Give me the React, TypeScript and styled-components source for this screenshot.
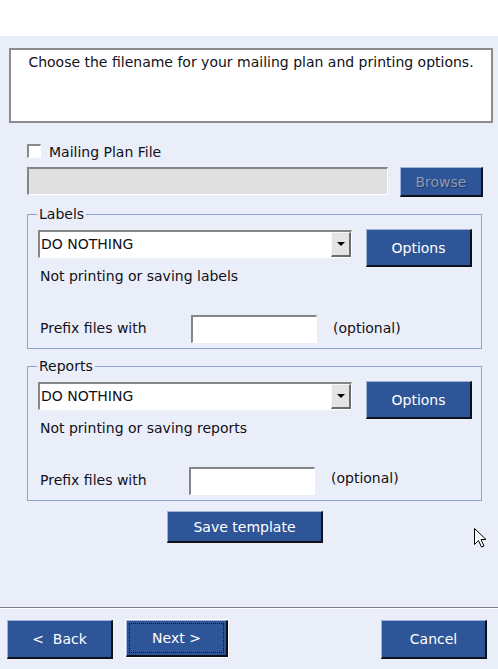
import styled, { createGlobalStyle } from 'styled-components';

const GlobalStyle = createGlobalStyle`
  body {
    margin: 0;
    background: #ffffff;
    font-family: "DejaVu Sans", "Liberation Sans", sans-serif;
    font-size: 14px;
    color: #111118;
  }
`;

const Page = styled.div`
  width: 498px;
  height: 669px;
  display: flex;
  flex-direction: column;
  position: relative;
  overflow: hidden;
`;

const TopBand = styled.div`
  height: 36px;
  background: #ffffff;
`;

const Body = styled.div`
  flex: 1;
  background: #eaeef8;
  display: flex;
  flex-direction: column;
  padding-top: 12px;
`;

const Intro = styled.div`
  margin: 0 5px 0 9px;
  height: 68px;
  background: #ffffff;
  border: 2px solid #8c8c8c;
  text-align: center;
  padding-top: 3px;
  line-height: 18px;
`;

const CheckRow = styled.label`
  display: flex;
  align-items: center;
  gap: 8px;
  margin: 21px 0 0 27px;
  height: 16px;
`;

const CheckBox = styled.span`
  width: 11px;
  height: 11px;
  margin-top: -2px;
  background: #ffffff;
  border-top: 2px solid #8a8a8a;
  border-left: 2px solid #8a8a8a;
  border-bottom: 1px solid #ffffff;
  border-right: 1px solid #ffffff;
`;

const FileRow = styled.div`
  display: flex;
  align-items: flex-start;
  margin: 7px 0 0 27px;
  gap: 12px;
`;

const FileField = styled.div`
  width: 358px;
  height: 25px;
  background: #e0e0e0;
  border-top: 2px solid #858585;
  border-left: 2px solid #858585;
  border-bottom: 1px solid #ffffff;
  border-right: 1px solid #ffffff;
`;

const Button = styled.button<{ $w: number; $h: number; $disabled?: boolean; $focus?: boolean }>`
  width: ${(p) => p.$w}px;
  height: ${(p) => p.$h}px;
  box-sizing: border-box;
  background: #2e5597;
  border-top: 1px solid #9fb4dc;
  border-left: 1px solid #9fb4dc;
  border-right: 2px solid #101018;
  border-bottom: 2px solid #101018;
  color: ${(p) => (p.$disabled ? '#8d9bb6' : '#ffffff')};
  text-shadow: ${(p) => (p.$disabled ? '1px 1px 0 #20386a' : 'none')};
  font-family: "DejaVu Sans", "Liberation Sans", sans-serif;
  font-size: 14px;
  padding: 0;
  display: flex;
  align-items: center;
  justify-content: center;
  outline: ${(p) => (p.$focus ? '1px solid #ffffff' : 'none')};
  outline-offset: 0;
  position: relative;
  cursor: default;
`;

const FocusRing = styled.span`
  position: absolute;
  inset: 2px;
  border: 1px dotted #111111;
`;

const Group = styled.fieldset<{ $top: number }>`
  margin: ${(p) => p.$top}px 16px 0 27px;
  padding: 0 8px 5px 10px;
  border: 1px solid #88a4d8;
  min-width: 0;
`;

const Legend = styled.legend`
  padding: 0 2px;
  margin-left: -1px;
  line-height: 16px;
`;

const GroupGrid = styled.div`
  display: grid;
  grid-template-columns: 314px 106px;
  column-gap: 14px;
  margin-top: 7px;
`;

const Left = styled.div`
  display: flex;
  flex-direction: column;
`;

const Select = styled.div`
  height: 25px;
  margin-top: 1px;
  background: #ffffff;
  border-top: 2px solid #858585;
  border-left: 2px solid #858585;
  border-bottom: 1px solid #ffffff;
  border-right: 1px solid #ffffff;
  display: flex;
  align-items: stretch;
`;

const SelectText = styled.span`
  flex: 1;
  padding-left: 1px;
  line-height: 24px;
`;

const ArrowBox = styled.span`
  width: 17px;
  background: #e4e4e4;
  border-top: 1px solid #f6f6f6;
  border-left: 1px solid #f6f6f6;
  border-right: 2px solid #6c6c6c;
  border-bottom: 2px solid #6c6c6c;
  display: flex;
  align-items: center;
  justify-content: center;
`;

const Triangle = styled.span`
  width: 0;
  height: 0;
  border-left: 4px solid transparent;
  border-right: 4px solid transparent;
  border-top: 4px solid #000000;
`;

const Note = styled.div`
  margin-top: 10px;
  padding-left: 2px;
  line-height: 16px;
`;

const PrefixRow = styled.div`
  display: flex;
  align-items: center;
  height: 28px;
  margin-top: 31px;
  padding-left: 2px;
  grid-column: 1 / 3;
`;

const PrefixLabel = styled.span<{ $w: number }>`
  width: ${(p) => p.$w}px;
  position: relative;
  top: -1px;
`;

const PrefixInput = styled.div`
  width: 123px;
  height: 25px;
  background: #ffffff;
  border-top: 2px solid #858585;
  border-left: 2px solid #858585;
  border-bottom: 1px solid #ffffff;
  border-right: 1px solid #ffffff;
  margin-right: 16px;
`;

const Optional = styled.span<{ $lift: number }>`
  position: relative;
  top: ${(p) => -p.$lift}px;
`;

const SaveRow = styled.div`
  margin: 10px 0 0 167px;
`;

const Spacer = styled.div`
  flex: 1;
`;

const Divider = styled.div`
  height: 1px;
  background: #7c7c7c;
  border-bottom: 1px solid #ffffff;
`;

const Footer = styled.div`
  display: flex;
  align-items: flex-start;
  padding: 11px 11px 10px 7px;
  height: 39px;
`;

const FooterGap = styled.div<{ $w: number }>`
  width: ${(p) => p.$w}px;
`;

const Cursor = styled.svg`
  position: absolute;
  left: 474px;
  top: 528px;
`;

function OptionGroup(props: {
  title: string;
  note: string;
  labelWidth: number;
  optionalLift: number;
}) {
  return (
    <Group $top={9}>
      <Legend>{props.title}</Legend>
      <GroupGrid>
        <Left>
          <Select>
            <SelectText>DO NOTHING</SelectText>
            <ArrowBox>
              <Triangle />
            </ArrowBox>
          </Select>
          <Note>{props.note}</Note>
        </Left>
        <Button $w={106} $h={38}>Options</Button>
        <PrefixRow>
          <PrefixLabel $w={props.labelWidth}>Prefix files with</PrefixLabel>
          <PrefixInput />
          <Optional $lift={props.optionalLift}>(optional)</Optional>
        </PrefixRow>
      </GroupGrid>
    </Group>
  );
}

export default function App() {
  return (
    <>
      <GlobalStyle />
      <Page>
        <TopBand />
        <Body>
          <Intro>Choose the filename for your mailing plan and printing options.</Intro>

          <CheckRow>
            <CheckBox />
            Mailing Plan File
          </CheckRow>

          <FileRow>
            <FileField />
            <Button $w={83} $h={30} $disabled>Browse</Button>
          </FileRow>

          <OptionGroup
            title="Labels"
            note="Not printing or saving labels"
            labelWidth={151}
            optionalLift={1}
          />

          <OptionGroup
            title="Reports"
            note="Not printing or saving reports"
            labelWidth={149}
            optionalLift={3}
          />

          <SaveRow>
            <Button $w={156} $h={32}>Save template</Button>
          </SaveRow>

          <Spacer />
          <Divider />
          <Footer>
            <Button $w={106} $h={39}>&lt;&nbsp; Back</Button>
            <FooterGap $w={13} />
            <Button $w={102} $h={37} $focus>
              <FocusRing />
              Next &gt;
            </Button>
            <FooterGap $w={153} />
            <Button $w={106} $h={39}>Cancel</Button>
          </Footer>
        </Body>
        <Cursor width="13" height="20" viewBox="0 0 13 20">
          <path
            d="M0.5 0.5 L0.5 16.5 L4.5 12.5 L7.5 19 L10 18 L7 11.5 L12 11.5 Z"
            fill="#ffffff"
            stroke="#000000"
            strokeWidth="1"
          />
        </Cursor>
      </Page>
    </>
  );
}
